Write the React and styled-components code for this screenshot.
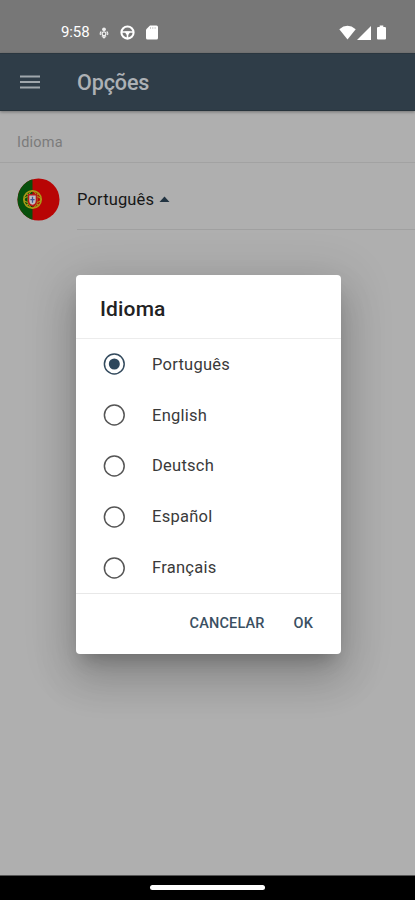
import React from "react";
import styled, { createGlobalStyle } from "styled-components";

const GlobalStyle = createGlobalStyle`
  * { box-sizing: border-box; }
  body { margin: 0; background: #afafaf; font-family: Roboto, sans-serif; }
  button { font-family: inherit; }
`;

const Screen = styled.div`
  position: relative;
  display: flex;
  flex-direction: column;
  width: 415px;
  height: 900px;
  overflow: hidden;
  background: #afafaf;
`;

const StatusBar = styled.header`
  display: flex;
  justify-content: space-between;
  height: 53px;
  padding: 24px 29px 0 61px;
  background: #777777;
  color: #fff;
`;

const StatusGroup = styled.div`
  display: flex;
  align-items: center;
  height: 17px;
  gap: ${({ $gap }) => $gap}px;
`;

const Clock = styled.span`
  width: 27px;
  font-size: 15px;
  letter-spacing: -0.1px;
  line-height: 17px;
  white-space: nowrap;
`;

const AppBar = styled.div`
  display: flex;
  align-items: center;
  gap: 37px;
  height: 58px;
  flex: none;
  padding-left: 20px;
  background: #2f3d48;
  border-top: 1px solid #2a363f;
  border-bottom: 1px solid #28343c;
  box-shadow: 0 1px 3px rgba(0, 0, 0, 0.35);
`;

const AppTitle = styled.h1`
  margin: 0;
  padding-top: 1px;
  color: #adb1b5;
  font-size: 21.5px;
  font-weight: 500;
  letter-spacing: -0.1px;
  line-height: 28px;
`;

const Content = styled.main`
  flex: 1;
`;

const SectionTitle = styled.h2`
  height: 52px;
  margin: 0;
  padding: 22px 0 0 17px;
  border-bottom: 1px solid #a2a2a2;
  color: #7b7b7b;
  font-size: 14.5px;
  font-weight: 400;
  letter-spacing: 0.2px;
  line-height: 20px;
`;

const LanguageRow = styled.div`
  display: flex;
  height: 67px;
  padding-left: 17px;
  gap: 17px;
`;

const FlagSlot = styled.div`
  width: 43px;
  padding-top: 15px;
`;

const LanguageValue = styled.div`
  display: flex;
  flex: 1;
  align-items: center;
  gap: 5px;
  padding-top: 6px;
  border-bottom: 1px solid #a0a0a0;
  color: #171717;
  font-size: 16.5px;
  letter-spacing: 0.15px;
`;

const NavBar = styled.footer`
  display: flex;
  justify-content: center;
  height: 25px;
  padding-top: 9px;
  background: #000;
  border-top: 1px solid #555;
`;

const NavHandle = styled.div`
  width: 115px;
  height: 5px;
  border-radius: 3px;
  background: #fff;
`;

const Dialog = styled.section`
  position: absolute;
  top: 275px;
  left: 76px;
  display: flex;
  flex-direction: column;
  width: 265px;
  height: 379px;
  border-radius: 4px;
  background: #fff;
  box-shadow: 0 12px 16px -7px rgba(0, 0, 0, 0.2), 0 25px 40px 3px rgba(0, 0, 0, 0.14),
    0 9px 48px 9px rgba(0, 0, 0, 0.12);
`;

const DialogTitle = styled.h2`
  height: 64px;
  margin: 0;
  padding: 20px 0 0 24px;
  border-bottom: 1px solid #ececec;
  color: #222;
  font-size: 21px;
  font-weight: 500;
  letter-spacing: 0.15px;
  line-height: 28px;
`;

const OptionList = styled.div`
  display: grid;
  grid-template-rows: repeat(5, 1fr);
  height: 254px;
`;

const Option = styled.label`
  display: flex;
  align-items: center;
  gap: 27px;
  padding-left: 27px;
  color: #3a3a3a;
  font-size: 16.5px;
  letter-spacing: 0.25px;
`;

const DialogActions = styled.div`
  display: flex;
  flex: 1;
  align-items: center;
  justify-content: flex-end;
  gap: 29px;
  padding: 0 28px 2px 0;
  border-top: 1px solid #e8e8e8;
`;

const TextButton = styled.button`
  padding: 0;
  border: 0;
  background: none;
  color: #3a5062;
  font-size: 14.5px;
  font-weight: 500;
  letter-spacing: 0.15px;
`;

const Glyph = styled.svg`
  display: block;
  flex: none;
`;

const BatterySlot = styled.span`
  margin-left: 5px;
`;

const languages = ["Português", "English", "Deutsch", "Español", "Français"];

const MicIcon = () => (
  <Glyph width="10" height="14" viewBox="0 0 10 14" fill="none" stroke="#eee">
    <circle cx="5" cy="3.3" r="1.9" fill="#eee" stroke="none" />
    <path d="M2.300 5.500Q.5 7.200 1.600 9M7.700 5.500Q9.500 7.200 8.400 9" strokeWidth="1.100" />
    <circle cx="5" cy="7.800" r="1.900" strokeWidth="1.300" />
    <path d="M2.300 10.300L5 12.800l2.700-2.500z" fill="#eee" stroke="none" />
  </Glyph>
);

const WheelIcon = () => (
  <Glyph width="15" height="15" viewBox="0 0 16 16" fill="none" stroke="#fff">
    <circle cx="8" cy="8" r="6.500" strokeWidth="2.200" />
    <path d="M2 7.500h12M8 8v6" strokeWidth="1.700" />
    <path d="M5 7h6L9.300 10H6.700z" fill="#fff" stroke="none" />
  </Glyph>
);

const CardIcon = () => (
  <Glyph width="12" height="15" viewBox="0 0 12 15">
    <path fill="#fff" d="M4 .5h6.500Q12 .5 12 2v11q0 1.500-1.500 1.500h-9Q0 14.500 0 13V4.500z" />
    <path d="M4.500 2v2M6.800 2v2M9.100 2v2" stroke="#ccc" strokeWidth="1" />
  </Glyph>
);

const WifiIcon = () => (
  <Glyph width="17" height="15" viewBox="0 0 17 15">
    <path fill="#fff" d="M.3 4.200Q8.500-2.700 16.700 4.200L8.500 14.500z" />
  </Glyph>
);

const SignalIcon = () => (
  <Glyph width="14" height="14" viewBox="0 0 14 14">
    <path fill="#fff" d="M0 14L14 0v14z" />
  </Glyph>
);

const BatteryIcon = () => (
  <Glyph width="9" height="15" viewBox="0 0 9 15">
    <path fill="#fff" d="M2.700.5h3.600v1.400h1.500Q9 1.900 9 3v10.500q0 1-1 1H1q-1 0-1-1V3q0-1.100 1.200-1.100h1.500z" />
  </Glyph>
);

const MenuIcon = () => (
  <Glyph width="20" height="14" viewBox="0 0 20 14">
    <path d="M0 1.500h20M0 7h20M0 12.500h20" stroke="#a0a7ac" strokeWidth="1.900" />
  </Glyph>
);

const PortugalFlag = () => (
  <Glyph width="43" height="43" viewBox="0 0 43 43">
    <defs>
      <clipPath id="flag-circle"><circle cx="21.500" cy="21.500" r="21" /></clipPath>
    </defs>
    <g clipPath="url(#flag-circle)">
      <path fill="#b80505" d="M0 0h43v43H0z" />
      <path fill="#07500c" d="M0 0h15.500v43H0z" />
    </g>
    <g fill="none" stroke="#aa9b18">
      <circle cx="15.500" cy="21.500" r="8.700" strokeWidth="1.600" />
      <ellipse cx="15.500" cy="21.500" rx="8.500" ry="3.500" strokeWidth="1.100" />
      <ellipse cx="15.500" cy="21.500" rx="4.500" ry="8.500" strokeWidth="1.100" />
      <path d="M9.500 15.500l12 12M9.500 27.500l12-12" strokeWidth="1.200" />
    </g>
    <path fill="#b51b1b" d="M10.800 16h9.400v7q0 4.800-4.700 5.300-4.700-.5-4.700-5.300z" />
    <path fill="#c0c0c5" d="M12.300 17.500h6.400v5.300q0 3.500-3.200 4-3.200-.5-3.200-4z" />
    <path stroke="#435393" strokeWidth="1.300" d="M15.500 18.800v6M13.400 21.600h4.200" />
  </Glyph>
);

const ArrowUp = () => (
  <Glyph width="11" height="6" viewBox="0 0 11 6">
    <path fill="#223442" d="M.5 6L5.500.5l5 5.500z" />
  </Glyph>
);

const Radio = ({ checked }) => (
  <Glyph width="22" height="22" viewBox="0 0 22 22">
    <circle cx="11.300" cy="11" r="9.900" fill="none" stroke={checked ? "#344b5e" : "#555"} strokeWidth="1.500" />
    {checked && <circle cx="11.300" cy="11" r="5.500" fill="#2d475c" />}
  </Glyph>
);

export default function App() {
  return (
    <>
      <GlobalStyle />
      <Screen>
        <StatusBar>
          <StatusGroup $gap={11}>
            <Clock>9:58</Clock>
            <MicIcon />
            <WheelIcon />
            <CardIcon />
          </StatusGroup>
          <StatusGroup $gap={1}>
            <WifiIcon />
            <SignalIcon />
            <BatterySlot><BatteryIcon /></BatterySlot>
          </StatusGroup>
        </StatusBar>
        <AppBar>
          <MenuIcon />
          <AppTitle>Opções</AppTitle>
        </AppBar>
        <Content>
          <SectionTitle>Idioma</SectionTitle>
          <LanguageRow>
            <FlagSlot><PortugalFlag /></FlagSlot>
            <LanguageValue>Português <ArrowUp /></LanguageValue>
          </LanguageRow>
        </Content>
        <NavBar><NavHandle /></NavBar>
        <Dialog role="dialog" aria-label="Idioma">
          <DialogTitle>Idioma</DialogTitle>
          <OptionList>
            {languages.map((name, i) => (
              <Option key={name}>
                <Radio checked={i === 0} />
                {name}
              </Option>
            ))}
          </OptionList>
          <DialogActions>
            <TextButton>CANCELAR</TextButton>
            <TextButton>OK</TextButton>
          </DialogActions>
        </Dialog>
      </Screen>
    </>
  );
}
